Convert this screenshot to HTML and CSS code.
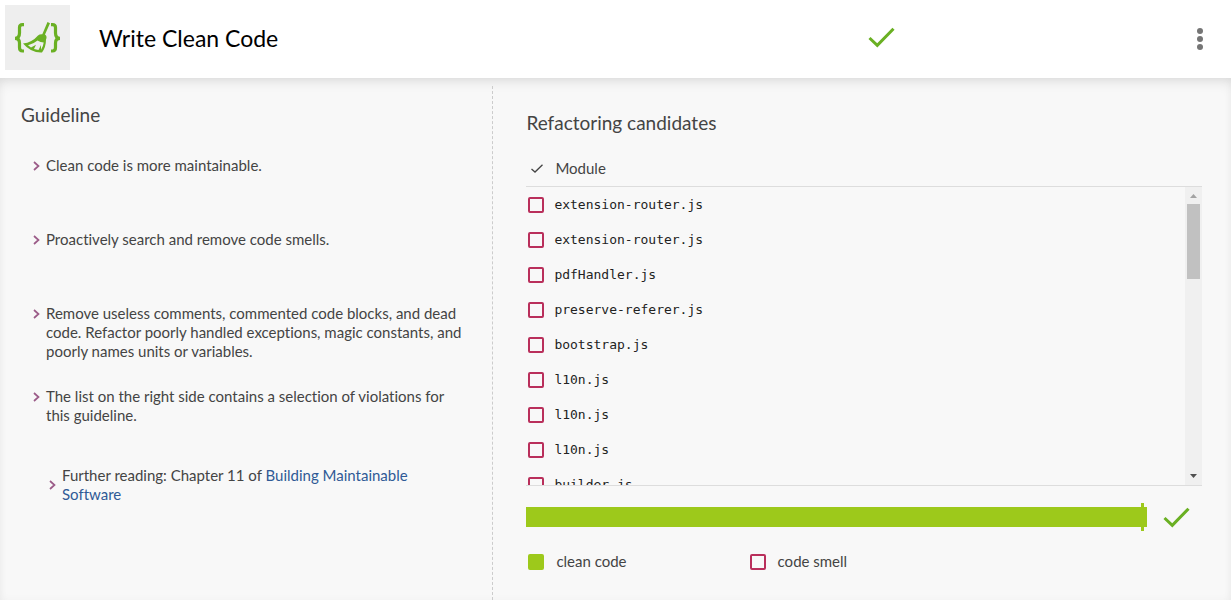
FILE: index.html
```html
<!DOCTYPE html>
<html lang="en">
<head>
<meta charset="utf-8">
<title>Write Clean Code</title>
<link rel="stylesheet" href="styles.css">
</head>
<body>
<svg class="defs" width="0" height="0" aria-hidden="true">
  <symbol id="tick" viewBox="0 0 27 21"><path d="M1.5 11 L9.3 18.3 L25.5 1.7" fill="none" stroke="currentColor" stroke-width="3"/></symbol>
  <symbol id="chevron" viewBox="0 0 7 10"><path d="M1 1 L5.5 5 L1 9" fill="none" stroke="currentColor" stroke-width="1.7"/></symbol>
</svg>
<header class="header">
  <div class="logo">
    <svg width="47" height="33" viewBox="0 0 47 33" aria-hidden="true">
      <g fill="none" stroke="#6ab023" stroke-width="3.2">
        <path d="M10 3.600H8.500Q5.500 3.600 5.500 6.600V12Q5.500 17.300 1 17.300Q5.500 17.300 5.500 22V26.500Q5.500 30 8.500 30H10"/>
        <path d="M37 3.600H38.500Q41.500 3.600 41.500 6.600V12Q41.500 17.300 46 17.300Q41.500 17.300 41.500 22V26.500Q41.500 30 38.500 30H37"/>
      </g>
      <path d="M33.500 1L36 2.200L31 13.500Q33.500 15.500 32 18.500Q32 26 28 31.500Q17 32 9 22.500Q18 21.500 24 14.500Q25.500 13 28.300 13.200Z" fill="#6ab023"/>
      <path d="M23.500 19.500Q19.500 23 14 24.300L17 26.500L22 23.800L20 28L24.500 29L27 24L27 28.800Q29.300 25.500 29.700 21.500Q26.500 21.500 23.500 19.500Z" fill="#eee"/>
    </svg>
  </div>
  <h1 class="title">Write Clean Code</h1>
  <div class="status"><svg class="tick" role="img" aria-label="Passed"><use href="#tick"/></svg></div>
  <button class="menu" type="button" aria-label="Menu"><span></span><span></span><span></span></button>
</header>
<main class="content">
  <section class="guideline">
    <h2 class="heading">Guideline</h2>
    <ul class="rules">
      <li class="rule"><svg class="chevron" aria-hidden="true"><use href="#chevron"/></svg><p>Clean code is more maintainable.</p></li>
      <li class="rule"><svg class="chevron" aria-hidden="true"><use href="#chevron"/></svg><p>Proactively search and remove code smells.</p></li>
      <li class="rule"><svg class="chevron" aria-hidden="true"><use href="#chevron"/></svg><p>Remove useless comments, commented code blocks, and dead code. Refactor poorly handled exceptions, magic constants, and poorly names units or variables.</p></li>
      <li class="rule"><svg class="chevron" aria-hidden="true"><use href="#chevron"/></svg><p>The list on the right side contains a selection of violations for this guideline.</p></li>
    </ul>
    <div class="reading"><svg class="chevron" aria-hidden="true"><use href="#chevron"/></svg><p>Further reading: Chapter 11 of <a href="#book">Building Maintainable Software</a></p></div>
  </section>
  <section class="candidates">
    <h2 class="heading">Refactoring candidates</h2>
    <div class="list-head"><svg class="head-tick" viewBox="0 0 12 9" aria-hidden="true"><path d="M.5 5L4 8L11.500 .7" fill="none" stroke="currentColor" stroke-width="1.300"/></svg><span>Module</span></div>
    <div class="list">
      <div class="modules">
        <label class="module"><input class="box" type="checkbox">extension-router.js</label>
        <label class="module"><input class="box" type="checkbox">extension-router.js</label>
        <label class="module"><input class="box" type="checkbox">pdfHandler.js</label>
        <label class="module"><input class="box" type="checkbox">preserve-referer.js</label>
        <label class="module"><input class="box" type="checkbox">bootstrap.js</label>
        <label class="module"><input class="box" type="checkbox">l10n.js</label>
        <label class="module"><input class="box" type="checkbox">l10n.js</label>
        <label class="module"><input class="box" type="checkbox">l10n.js</label>
        <label class="module"><input class="box" type="checkbox">builder.js</label>
      </div>
      <div class="scrollbar" aria-hidden="true">
        <svg class="arrow up" viewBox="0 0 7 4"><path d="M0 4L3.500 0L7 4Z"/></svg>
        <div class="thumb"></div>
        <svg class="arrow down" viewBox="0 0 7 4"><path d="M0 0L3.500 4L7 0Z"/></svg>
      </div>
    </div>
    <div class="progress">
      <div class="bar"><span class="target"></span></div>
      <svg class="tick" role="img" aria-label="Target reached"><use href="#tick"/></svg>
    </div>
    <div class="legend">
      <div class="key"><span class="box clean"></span>clean code</div>
      <div class="key"><span class="box"></span>code smell</div>
    </div>
  </section>
</main>
</body>
</html>
```
FILE: styles.css
```css
* { box-sizing: border-box; }
body {
  margin: 0;
  min-height: 100vh;
  display: flex;
  flex-direction: column;
  background: #f8f8f8;
  color: #444;
  font: 15px/19px Lato, "Open Sans", sans-serif;
  font-variant-ligatures: none;
}
h1, h2, p, ul { margin: 0; padding: 0; font-weight: 400; }
.defs { position: absolute; }
.header {
  display: flex;
  align-items: center;
  min-height: 78px;
  padding: 0 24px 3px 5px;
  background: #fff;
}
.logo {
  display: flex;
  align-items: center;
  justify-content: center;
  width: 65px;
  height: 65px;
  background: #eee;
}
.title { flex: 1; margin-left: 29px; color: #000; font-size: 23px; line-height: 32px; }
.status { width: 27%; display: flex; }
.tick { width: 27px; height: 21px; color: #6ab023; flex: none; }
.menu {
  display: flex;
  flex-direction: column;
  align-items: center;
  gap: 2px;
  width: 14px;
  padding: 2px 0 0;
  border: 0;
  background: none;
}
.menu span { width: 6px; height: 6px; border-radius: 50%; background: #757575; }
.content {
  flex: 1;
  display: flex;
  padding-top: 8px;
  box-shadow: inset 0 8px 14px -6px rgba(0, 0, 0, .13), inset 0 0 8px rgba(0, 0, 0, .03);
}
.heading { font-size: 19px; line-height: 24px; }
.guideline { width: 40%; padding: 17px 24px 0 21px; }
.rules { list-style: none; margin-top: 29px; padding-left: 12px; }
.rule { display: flex; gap: 6px; min-height: 74px; padding-bottom: 26px; }
.chevron { flex: none; width: 7px; height: 10px; margin-top: 5px; color: #9b5b88; }
.reading { display: flex; align-items: center; gap: 6px; margin-top: 5px; padding: 0 32px 0 28px; }
.reading .chevron { margin-top: 0; }
a { color: #2f5a96; text-decoration: none; }
.candidates { flex: 1; padding: 25px 29px 0 33px; border-left: 1px dashed #ccc; }
.list-head {
  display: flex;
  align-items: center;
  gap: 12px;
  height: 36px;
  margin-top: 16px;
  padding-left: 5px;
  border-bottom: 1px solid #ddd;
}
.head-tick { width: 12px; height: 9px; }
.list { display: flex; height: 299px; border-bottom: 1px solid #ddd; }
.modules { flex: 1; overflow: auto; scrollbar-width: none; }
.module {
  display: flex;
  align-items: center;
  gap: 10px;
  height: 35px;
  padding-left: 2px;
  color: #222;
  font: 13px/19px "DejaVu Sans Mono", monospace;
}
.box {
  appearance: none;
  flex: none;
  width: 16px;
  height: 16px;
  margin: 0;
  border: 2px solid #b92f5b;
  border-radius: 2px;
}
.clean { border-color: #9dc91b; background: #9dc91b; }
.scrollbar {
  display: flex;
  flex-direction: column;
  align-items: center;
  width: 17px;
  padding: 7px 0;
  background: #f0f0f0;
}
.arrow { width: 7px; height: 4px; fill: #505050; }
.up { fill: #a3a3a3; }
.thumb { width: 13px; height: 75px; margin: 6px 0 auto; background: #c1c1c1; }
.progress { display: flex; align-items: center; gap: 16px; margin: 17px 12px 0 0; height: 28px; }
.bar { flex: 1; position: relative; height: 20px; background: #9dc91b; }
.target { position: absolute; top: -4px; bottom: -4px; right: 3px; width: 3px; background: #9dc91b; }
.legend { display: grid; grid-template-columns: repeat(3, 1fr); margin: 21px 12px 0 0; }
.key { display: flex; align-items: center; gap: 12px; padding-left: 2px; }
```
